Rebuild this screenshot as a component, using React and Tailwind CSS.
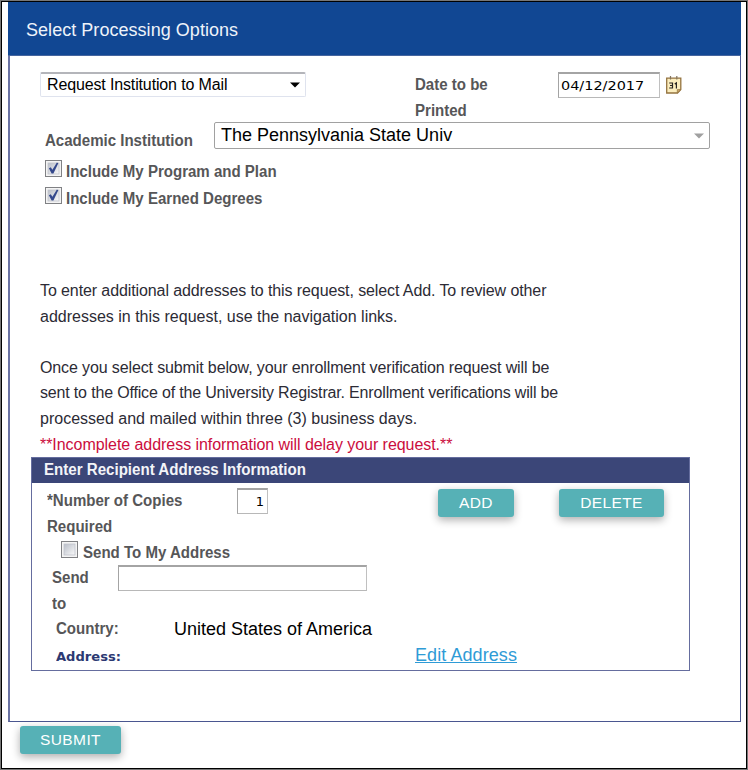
const label = "origin-left scale-x-[0.94] font-bold text-[#565658] text-[16px] leading-[25.6px] whitespace-nowrap";
const field = "border border-[#a4a4a4] border-t-2 border-r-[#c0c0c0] border-b-[#b8b8b8]";

function Check({ checked }) {
  return (
    <svg width="17" height="17" viewBox="0 0 17 17" className="block shrink-0">
      <defs>
        <linearGradient id="box" x1="0" y1="0" x2="1" y2="1">
          <stop offset="0" stopColor="#b9bec8" />
          <stop offset="1" stopColor="#fafafa" />
        </linearGradient>
      </defs>
      <rect x="0.5" y="0.5" width="16" height="16" fill="#f4f4f4" stroke="#808184" />
      <rect x="3" y="3" width="11" height="11" fill="url(#box)" stroke="#c0c4cc" strokeWidth="0.8" />
      {checked && <path d="M3.9 8.2 L5.8 7.2 L7.4 9.8 L11.9 2.4 L13.3 3.2 L8.4 13.4 L6.6 13.4 Z" fill="#34488c" />}
    </svg>
  );
}

function Calendar() {
  return (
    <svg width="16" height="18" viewBox="0 0 16 18" className="block">
      <path d="M0.7 2.2 H14.8 V13.5 L11.5 17 H0.7 Z" fill="#fbedbd" stroke="#94733f" strokeWidth="1.3" />
      <path d="M11.3 17 V13.6 H14.8 Z" fill="#cba968" stroke="#94733f" strokeWidth="0.7" />
      <path d="M4.5 0 V3.5 M10.8 0 V3.5" stroke="#84755d" strokeWidth="1.2" />
      <path d="M3.2 7 H6.5 V12 H3.2 M4 9.5 H6.5 M8.7 8 L10.4 6.9 V12.5" fill="none" stroke="#282420" strokeWidth="1.2" />
    </svg>
  );
}

function Button({ children, className }) {
  return (
    <button className={`block h-[28px] shrink-0 rounded-[3px] bg-[#56b1b6] text-[15.5px] leading-[28px] tracking-[0.4px] text-white shadow-[0_3px_8px_rgba(0,0,0,0.32)] ${className}`}>
      {children}
    </button>
  );
}

export default function App() {
  return (
    <div className="flex h-[770px] w-[748px] flex-col overflow-hidden border border-[#777] bg-white font-['Liberation_Sans',Arial,sans-serif]">
      <div className="flex h-[768px] flex-col border border-black pl-[6px]">
        <section className="h-[720px] w-[733px] border-x border-b border-[#4a5690] border-l-[#6a73a3] border-l-2">
          <header className="-ml-[2px] h-[54px] w-[733px] border-b border-[#45659f] bg-[#114793] pt-[16px] pl-[18px] text-[18px] leading-[24px] text-[#eef3fa]">
            <span className="tracking-[0.04px]">Select Processing Options</span>
          </header>

          <div className="flex h-[66px] items-start pt-[16px] pl-[30px]">
            <div className="flex h-[25px] w-[266px] items-center justify-between rounded-[2px] border border-[#dfe3ee] border-t-2 border-t-[#b4b5ba] pr-[5px] pl-[6px] text-[16px]">
              <span className="tracking-[-0.14px]">Request Institution to Mail</span>
              <svg width="10" height="6" viewBox="0 0 10 6"><path d="M0 0.5H10L5 5.5Z" fill="#000" /></svg>
            </div>
            <div className={`${label} ml-[109px] w-[143px]`}>Date to be<br />Printed</div>
            <div className={`${field} h-[26px] w-[102px] pl-[2px] font-['DejaVu_Sans',sans-serif] text-[13px] leading-[24px]`}>
              <div className="origin-left scale-x-[1.11]">04/12/2017</div>
            </div>
            <div className="mt-[4px] ml-[6px]"><Calendar /></div>
          </div>

          <div className="flex h-[38px] items-start pl-[35px]">
            <div className={`${label} mt-[6px] w-[169px]`}>Academic Institution</div>
            <div className="flex h-[27px] w-[496px] items-center justify-between rounded-[2px] border border-[#a1a1a1] pr-[5px] pl-[6px] text-[18px]">
              <span>The Pennsylvania State Univ</span>
              <svg width="10" height="6" viewBox="0 0 10 6"><path d="M0 0.5H10L5 5.5Z" fill="#a0a0a0" /></svg>
            </div>
          </div>

          <div className="flex h-[27px] items-start gap-[4px] pl-[35px]">
            <Check checked />
            <span className={`${label} -mt-px`}>Include My Program and Plan</span>
          </div>
          <div className="flex h-[91px] items-start gap-[4px] pl-[35px]">
            <Check checked />
            <span className={`${label} -mt-px`}>Include My Earned Degrees</span>
          </div>

          <div className="h-[179px] pl-[30px] text-[16px] leading-[25.6px] whitespace-nowrap text-[#2c2b35]">
            <p className="tracking-[-0.1px]">To enter additional addresses to this request, select Add. To review other</p>
            <p>addresses in this request, use the navigation links.</p>
            <p className="mt-[25.6px] tracking-[-0.125px]">Once you select submit below, your enrollment verification request will be</p>
            <p className="tracking-[-0.168px]">sent to the Office of the University Registrar. Enrollment verifications will be</p>
            <p>processed and mailed within three (3) business days.</p>
            <p className="tracking-[-0.05px] text-[#cb0d3d]">**Incomplete address information will delay your request.**</p>
          </div>

          <section className="ml-[21px] h-[214px] w-[659px] border border-[#656d9e]">
            <h2 className="h-[25px] bg-[#3b4678] pl-[12px] text-[16px] leading-[24px] font-bold whitespace-nowrap text-[#f3f4f8]">
              <span className="inline-block origin-left scale-x-[0.943]">Enter Recipient Address Information</span>
            </h2>
            <div className="flex h-[53px] items-start pt-[5px] pl-[15px]">
              <div className={`${label} w-[190px]`}>*Number of Copies<br />Required</div>
              <div className={`${field} h-[26px] w-[31px] pr-[3px] text-right font-['DejaVu_Sans',sans-serif] text-[13px] leading-[24px]`}>1</div>
              <Button className="mt-[1px] ml-[170px] w-[76px]">ADD</Button>
              <Button className="mt-[1px] ml-[45px] w-[105px]">DELETE</Button>
            </div>
            <div className="flex h-[29px] items-start gap-[5px] pt-[5px] pl-[29px]">
              <Check />
              <span className={`${label} -mt-px`}>Send To My Address</span>
            </div>
            <div className="flex h-[51px] items-start pl-[20px]">
              <div className={`${label} w-[66px]`}>Send<br />to</div>
              <div className={`${field} h-[26px] w-[249px]`} />
            </div>
            <div className="flex h-[26px] items-center pl-[24px]">
              <div className={`${label} w-[118px]`}>Country:</div>
              <div className="text-[18px] whitespace-nowrap">United States of America</div>
            </div>
            <div className="flex h-[26px] items-center pl-[24px]">
              <div className="w-[359px] origin-left scale-x-[1.09] pt-[3px] font-['DejaVu_Sans',sans-serif] text-[12px] font-bold text-[#2c3972]">Address:</div>
              <a className="text-[18px] tracking-[0.08px] whitespace-nowrap text-[#2f9bd6] underline">Edit Address</a>
            </div>
          </section>
        </section>
        <Button className="mt-[4px] ml-[12px] w-[101px]">SUBMIT</Button>
      </div>
    </div>
  );
}
